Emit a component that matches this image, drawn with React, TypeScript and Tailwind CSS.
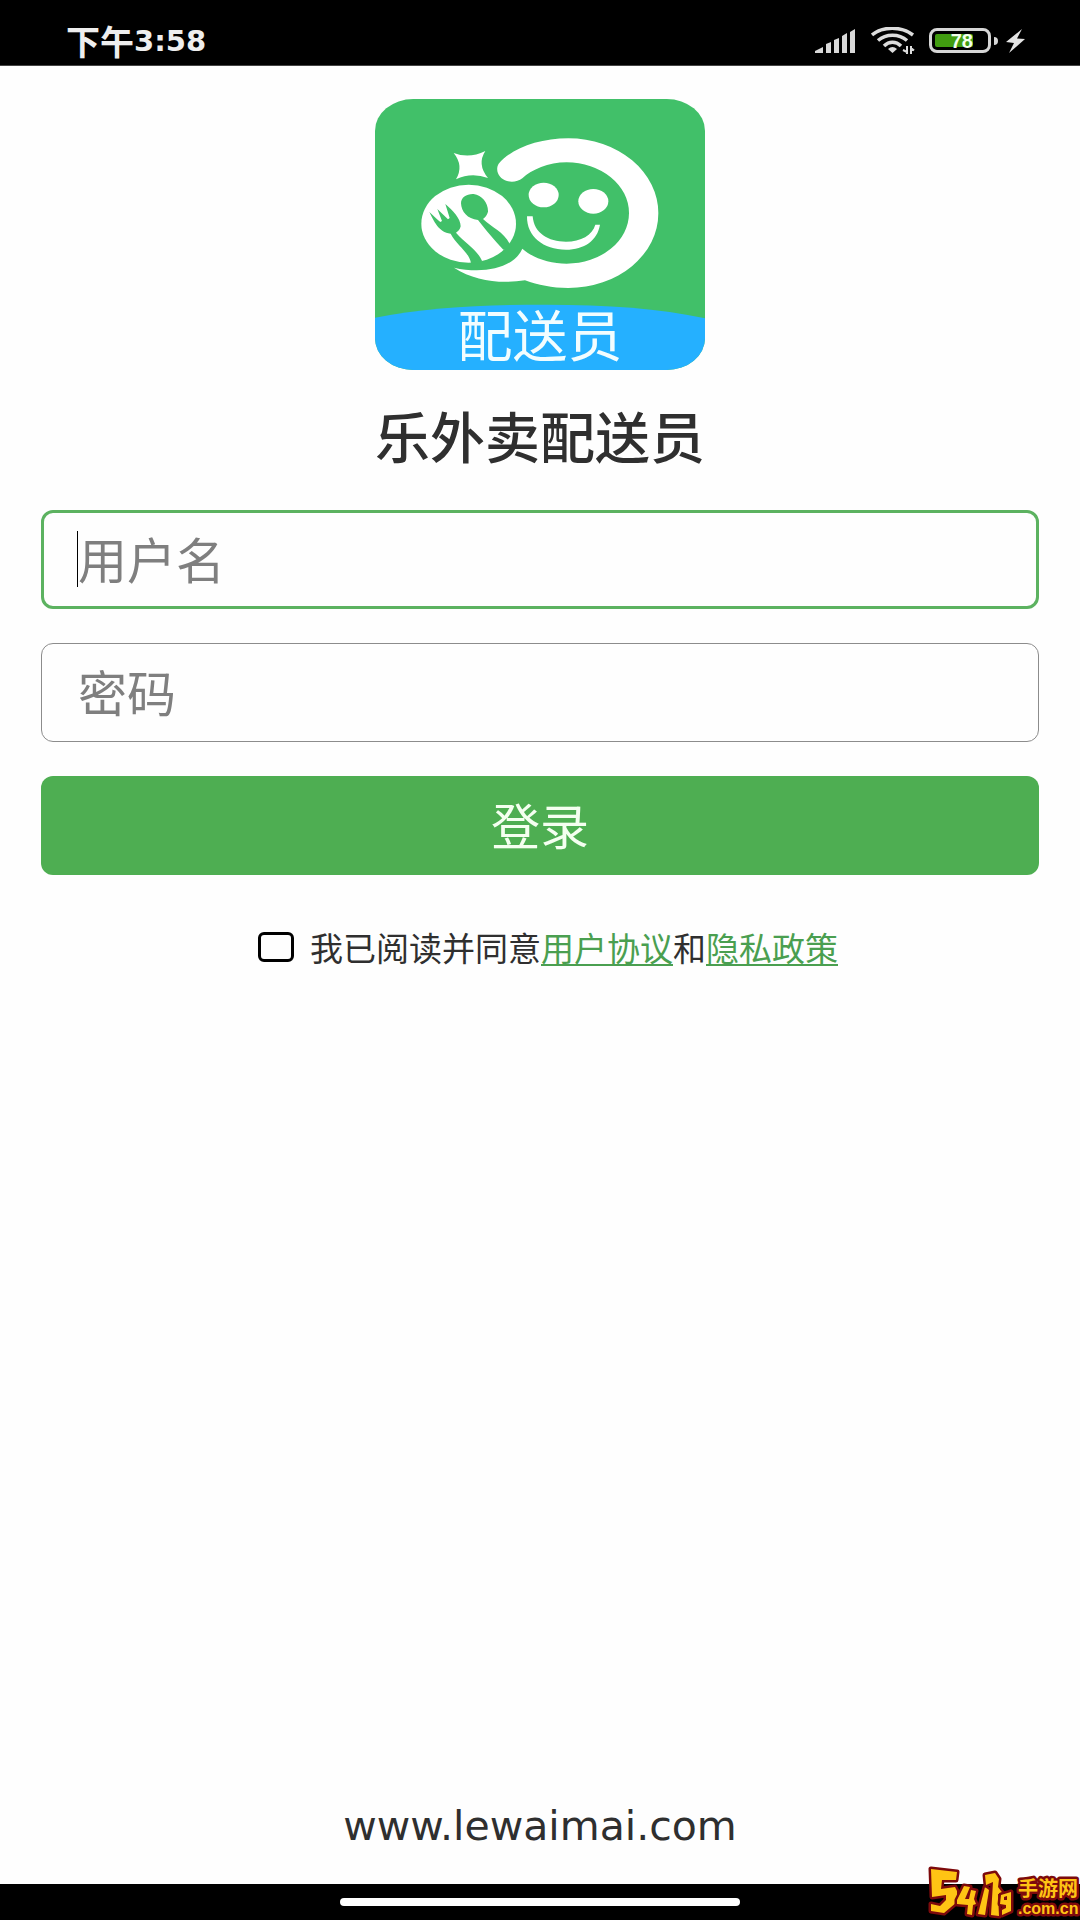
import React, { useState } from 'react';

const SignalIcon = () => (
  <svg className="h-6 w-10" viewBox="0 0 40 24" fill="#d9d9d9">
    <path d="M0 24 L0 22 L8 18 V24 Z M11 24 V15 L16 13 V24 Z M19 24 V11 L24 9 V24 Z M27 24 V7 L32 4 V24 Z M35 24 V3 L40 0 V24 Z" />
  </svg>
);

const WifiIcon = () => (
  <svg className="h-7 w-11" viewBox="0 0 44 28" fill="none" stroke="#dcdcdc" strokeWidth="3.500">
    <path d="M1 8 C12 -1 30 -1 42 8" />
    <path d="M7 13.500 C15 6.500 28 6.500 36 13.500" />
    <path d="M13 19 C18 14 25 14 30 19" />
    <path d="M17 22 Q21.500 18 26 22 L21.500 26 Z" fill="#dcdcdc" stroke="none" />
    <path d="M36 19 V27 M36 25 L32 23 M40 27 V19 M40 21 L43 23.500" strokeWidth="2" />
  </svg>
);

const BoltIcon = () => (
  <svg className="h-6 w-5" viewBox="0 0 20 24" fill="#e4e4e4">
    <path d="M16 0 L0 13 L8 14 L3 24 L19 10 L11 9.500 Z" />
  </svg>
);

const StatusBar = () => (
  <header className="flex h-[66px] items-center justify-between border-b border-[#444] bg-black pt-4 pr-[54px] pl-[66px]">
    <div className="flex items-center text-[34px] leading-8 font-bold text-[#eee]">
      下午<span className="font-['DejaVu_Sans'] text-[29px]">3:58</span>
    </div>
    <div className="flex items-center">
      <SignalIcon />
      <span className="ml-4 flex"><WifiIcon /></span>
      <div className="ml-[14px] flex h-[25px] w-[62px] rounded-lg border-3 border-[#d6d6d6] p-[3px]">
        <div className="flex w-[38px] items-center justify-end rounded-xs bg-[#419c10] font-['Liberation_Sans'] text-[20px] leading-none font-bold text-[#f4ffec]">
          78
        </div>
      </div>
      <span className="ml-[3px] h-2 w-1 rounded-r-sm bg-[#d6d6d6]"></span>
      <span className="ml-2 flex"><BoltIcon /></span>
    </div>
  </header>
);

const Logo = () => (
  <svg className="h-[271px] w-[330px] overflow-visible" viewBox="45 42 990 813" role="img" aria-label="配送员">
    <defs>
      <clipPath id="badge">
        <rect x="45" y="42" width="990" height="813" rx="115" ry="95" />
      </clipPath>
    </defs>
    <g clipPath="url(#badge)">
      <rect x="45" y="42" width="990" height="813" fill="#41c069" />
      <path d="M45 698 C210 666 370 659 560 659 C740 659 900 670 1035 700 V855 H45 Z" fill="#25b0ff" />
    </g>
    {/* head ring with the swoosh under the plate */}
    <path
      fill="#fff"
      d="M416 236 C452 192 535 160 625 160 A270 224 0 0 1 895 385 A270 224 0 0 1 625 609 C575 609 535 600 495 586 C420 597 345 588 282 548 C370 568 462 550 487 491 C520 520 570 536 620 536 A187 152 0 0 0 807 384 A187 152 0 0 0 620 232 C565 232 515 254 487 280 C465 297 425 293 414 265 C410 255 411 244 416 236 Z"
    />
    <ellipse cx="551" cy="330" rx="45" ry="37" fill="#fff" />
    <ellipse cx="700" cy="349" rx="45" ry="37" fill="#fff" />
    <path
      fill="#fff"
      d="M501 394 H518 C522 445 565 470 618 470 C663 470 697 450 706 419 H720 C712 466 673 494 618 494 C550 494 500 455 501 394 Z"
    />
    <path fill="#fff" d="M281 204 Q328 222 376 198 Q350 238 384 279 Q334 260 288 283 Q312 242 281 204 Z" />
    <ellipse cx="326" cy="416" rx="142" ry="117" fill="#fff" />
    {/* fork, then spoon */}
    <g fill="#41c069">
      <path d="M208 381 C220 392 232 405 241 411 L246 408 L232 372 L264 403 L269 399 L256 357 C278 376 302 400 302 424 C300 434 294 439 288 443 C315 474 350 492 366 527 L360 536 L333 534 C326 500 290 480 272 446 C235 442 222 408 208 381 Z" />
      <path d="M303 355 C303 337 320 326 341 327 C366 331 385 354 384 380 C381 391 375 397 369 402 C396 428 430 440 449 476 L455 486 L430 494 C402 465 382 440 354 405 C322 402 304 380 303 355 Z" />
    </g>
    <text x="540" y="814" textAnchor="middle" fill="#f2fdff" fontSize="165" className="font-['Noto_Sans_CJK_SC','Noto_Sans',sans-serif]">
      配送员
    </text>
  </svg>
);

const Watermark = () => (
  <svg className="absolute right-0 bottom-0 h-[54px] w-[152px] overflow-visible" viewBox="0 0 152 54" aria-hidden="true">
    <g fill="#ffc414" stroke="#7d0a0c" strokeWidth="5" strokeLinejoin="round" paintOrder="stroke">
      <path d="M3 3 L29 6 L28 14 H14 L13 23 L27 21 L29 25 V36 L16 47 L3 45 V38 L12 40 L18 34 V29 L4 31 Z" />
      <path d="M36 20 L42 21 L37 33 H41 L43 24 L48 25 L46 33 L48 38 L45 39 L44 49 L39 48 L40 39 L29 38 V34 Z" />
      <path d="M57 21 L61 24 L57 49 L50 48 Z" />
      <path d="M57 9 L67 7 L71 13 L70 21 L76 29 L70 28 L71 50 L63 49 L65 16 L58 19 Z" />
      <path fillRule="evenodd" d="M73 29 L83 26 V45 L74 49 V44 L78 42 V39 L72 38 Z M76 31 L79 30 V34 H76 Z" />
      <text x="90" y="30" fontSize="20" fontWeight="700" className="font-['Noto_Sans_CJK_SC',sans-serif]">手游网</text>
      <text x="90" y="48" fontSize="16" fontWeight="700" className="font-['Liberation_Sans',sans-serif]">.com.cn</text>
    </g>
  </svg>
);

const App: React.FC = () => {
  const [username, setUsername] = useState('');
  const [password, setPassword] = useState('');
  const [agreed, setAgreed] = useState(false);

  return (
    <div className="relative flex min-h-screen flex-col bg-[#fefefe] font-['Noto_Sans_CJK_SC','Noto_Sans',sans-serif] text-[#2f2f2f]">
      <StatusBar />

      <main className="flex flex-1 flex-col px-[41px] pt-[33px]">
        <div className="flex justify-center">
          <Logo />
        </div>
        <h1 className="mt-[30px] text-center text-[55px] leading-[68px] font-medium">乐外卖配送员</h1>

        <form className="mt-[42px] flex flex-col gap-[34px]" onSubmit={(e) => e.preventDefault()}>
          <div className="relative">
            <input
              type="text"
              aria-label="用户名"
              placeholder="用户名"
              value={username}
              onChange={(e) => setUsername(e.target.value)}
              className="block h-[99px] w-full rounded-xl border-3 border-[#5cb260] px-[34px] pb-1 text-[49px] outline-none placeholder:text-[#7f7f7f]"
            />
            {username === '' && <span className="absolute top-[21px] left-9 h-14 w-px bg-black"></span>}
          </div>
          <input
            type="password"
            aria-label="密码"
            placeholder="密码"
            value={password}
            onChange={(e) => setPassword(e.target.value)}
            className="h-[99px] w-full rounded-xl border border-[#8c8c8c] px-9 pb-1 text-[49px] outline-none placeholder:text-[#7f7f7f]"
          />
          <button type="submit" className="h-[99px] w-full rounded-xl bg-[#4eae52] pb-1 text-[49px] text-[#f4fff0]">
            登录
          </button>
        </form>

        <div className="mt-[52px] flex items-center justify-center gap-4 pl-4">
          <input
            id="agree"
            type="checkbox"
            checked={agreed}
            onChange={(e) => setAgreed(e.target.checked)}
            className="h-[30px] w-9 appearance-none rounded-md border-3 border-black checked:bg-[#4eae52]"
          />
          <div className="text-[33px] leading-10">
            <label htmlFor="agree">我已阅读并同意</label>
            <a href="#terms" className="text-[#4a9f50] underline decoration-2 underline-offset-3">用户协议</a>
            和
            <a href="#privacy" className="text-[#4a9f50] underline decoration-2 underline-offset-3">隐私政策</a>
          </div>
        </div>
      </main>

      <footer>
        <p className="pb-[34px] text-center font-['DejaVu_Sans',sans-serif] text-[41px] leading-[48px]">www.lewaimai.com</p>
        <div className="flex h-9 items-center justify-center bg-black">
          <span className="h-2 w-[400px] rounded-full bg-white"></span>
        </div>
      </footer>
      <Watermark />
    </div>
  );
};

export default App;
